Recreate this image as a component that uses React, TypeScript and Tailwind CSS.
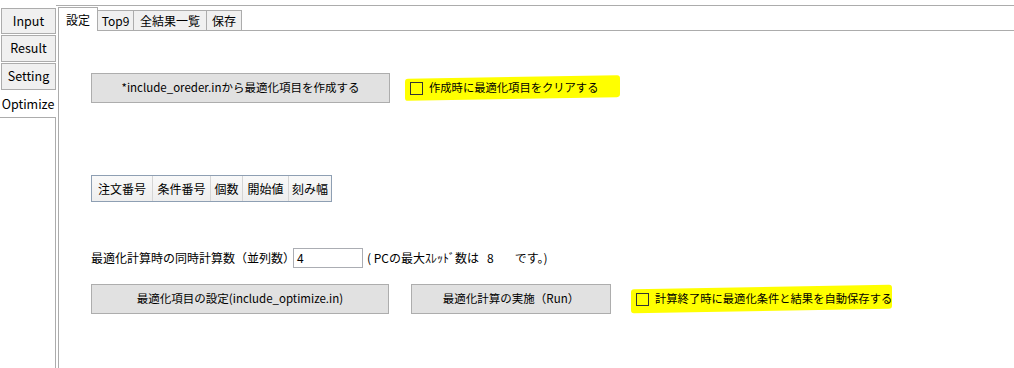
import React from "react";

const F = "font-['Noto_Sans_CJK_JP','Noto_Sans',sans-serif]";

function LeftTab({ label, selected, h }: { label: string; selected?: boolean; h: string }) {
  if (selected) {
    return (
      <div className={`${h} w-[56px] bg-white flex items-center justify-center text-[12.5px] text-black`}>
        {label}
      </div>
    );
  }
  return (
    <div
      className={`${h} ml-[1px] w-[55px] bg-[#f0f0f0] border border-[#acacac] flex items-center justify-center text-[12.5px] text-black`}
    >
      {label}
    </div>
  );
}

function Btn({ label, w }: { label: string; w: string }) {
  return (
    <div
      className={`${w} h-[30px] bg-[#e1e1e1] border border-[#adadad] flex items-center justify-center text-[11.5px] text-black leading-none whitespace-nowrap`}
    >
      {label}
    </div>
  );
}

function HiCheck({ label, w, h }: { label: string; w: string; h: string }) {
  return (
    <div className={`relative ${w} ${h} flex items-center`}>
      <div className="absolute inset-0 bg-[#ffff00] rounded-[3px] -skew-y-[1deg]" />
      <div className="relative flex items-center gap-[6px] pl-[5px]">
        <div className="w-[13px] h-[13px] border border-[#333333] shrink-0" />
        <span className="text-[11.3px] text-black leading-none whitespace-nowrap">{label}</span>
      </div>
    </div>
  );
}

export default function App() {
  const cols: [string, string][] = [
    ["注文番号", "w-[60px]"],
    ["条件番号", "w-[58px]"],
    ["個数", "w-[32px]"],
    ["開始値", "w-[46px]"],
    ["刻み幅", "w-[43px]"],
  ];
  return (
    <div className={`w-[1014px] h-[368px] bg-white overflow-hidden flex ${F}`}>
      {/* left vertical tabs */}
      <div className="w-[56px] flex flex-col pt-[8px] shrink-0">
        <LeftTab label="Input" h="h-[26px]" />
        <div className="h-[1px]" />
        <LeftTab label="Result" h="h-[27px]" />
        <div className="h-[1px]" />
        <LeftTab label="Setting" h="h-[27px]" />
        <div className="h-[1px]" />
        <LeftTab label="Optimize" selected h="h-[26px]" />
        <div className="flex-1 w-[56px] border-t border-r border-[#acacac]" />
      </div>
      {/* outer panel */}
      <div className="flex-1 mt-[5px] border-t border-[#acacac] pl-[2px] flex flex-col">
        {/* inner tab header */}
        <div className="h-[25px] flex items-end">
          <div className="h-[24px] w-[40px] bg-white border-l border-t border-r border-[#acacac] flex items-center justify-center text-[12px] text-black">
            設定
          </div>
          <div className="h-[21px] w-[36px] bg-[#f0f0f0] border-t border-r border-b border-[#acacac] flex items-center justify-center text-[12px] text-black">
            Top9
          </div>
          <div className="h-[21px] w-[73px] bg-[#f0f0f0] border-t border-r border-b border-[#acacac] flex items-center justify-center text-[12px] text-black">
            全結果一覧
          </div>
          <div className="h-[21px] w-[35px] bg-[#f0f0f0] border-t border-r border-b border-[#acacac] flex items-center justify-center text-[12px] text-black">
            保存
          </div>
          <div className="flex-1 border-b border-[#acacac]" />
        </div>
        {/* inner panel */}
        <div className="flex-1 border-l border-[#acacac] pl-[32px] pt-[42px] flex flex-col">
          <div className="flex items-center">
            <Btn label="*include_oreder.inから最適化項目を作成する" w="w-[299px]" />
            <div className="w-[15px]" />
            <HiCheck label="作成時に最適化項目をクリアする" w="w-[215px]" h="h-[22px]" />
          </div>
          {/* table header */}
          <div className="mt-[72px] flex">
            <div className="flex border border-[#8e9fb3] h-[27px]">
              {cols.map(([c, w], i) => (
                <div
                  key={c}
                  className={`${w} h-full bg-gradient-to-b from-[#f9f9f9] to-[#eeeeee] flex items-center justify-center text-[12px] text-black ${
                    i > 0 ? "border-l border-[#d5d5d5]" : ""
                  }`}
                >
                  {c}
                </div>
              ))}
            </div>
          </div>
          {/* parallel count */}
          <div className="mt-[46px] flex items-center h-[20px] text-[12px] text-black whitespace-nowrap">
            <span className="w-[202px]">最適化計算時の同時計算数（並列数）</span>
            <div className="w-[70px] h-[20px] border border-[#abadb3] flex items-center pl-[3px] text-[12px]">
              4
            </div>
            <span className="ml-[4px]">( PCの最大ｽﾚｯﾄﾞ数は</span>
            <span className="ml-[8px]">8</span>
            <span className="ml-[21px]">です。)</span>
          </div>
          {/* buttons row */}
          <div className="mt-[16px] flex items-center">
            <Btn label="最適化項目の設定(include_optimize.in)" w="w-[298px]" />
            <div className="w-[22px]" />
            <Btn label="最適化計算の実施（Run）" w="w-[200px]" />
            <div className="w-[20px]" />
            <HiCheck label="計算終了時に最適化条件と結果を自動保存する" w="w-[261px]" h="h-[24px]" />
          </div>
        </div>
      </div>
    </div>
  );
}
